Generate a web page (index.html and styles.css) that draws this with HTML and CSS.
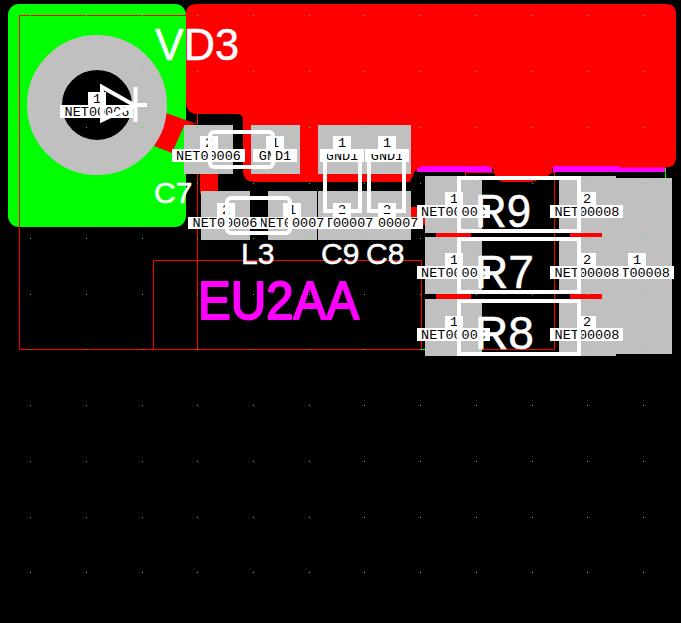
FILE: index.html
```html
<!DOCTYPE html>
<html lang="en">

<head>
    <meta charset="UTF-8">
    <title>EU2AA board view</title>
    <link rel="stylesheet" href="styles.css">
</head>

<body>
    <svg class="board" viewBox="0 0 681 623" width="681" height="623">
        <defs>
            <g id="dot-row">
                <rect x="30" width="1" height="1"/><rect x="86" width="1" height="1"/><rect x="142" width="1" height="1"/>
                <rect x="197" width="1" height="1"/><rect x="253" width="1" height="1"/><rect x="309" width="1" height="1"/>
                <rect x="364" width="1" height="1"/><rect x="420" width="1" height="1"/><rect x="476" width="1" height="1"/>
                <rect x="532" width="1" height="1"/><rect x="587" width="1" height="1"/><rect x="643" width="1" height="1"/>
            </g>
        </defs>

        <!-- copper -->
        <rect class="green" x="8" y="4" width="178" height="223" rx="11"/>
        <rect class="magenta" x="417" y="165" width="75" height="7"/>
        <rect class="magenta" x="553" y="165" width="112" height="7"/>
        <path class="red" d="M196 4H666Q676 4 676 14V157Q676 167.5 666 167.5H620V166H553Q553 174 546 177L532 182H505Q496 182 494 172Q493 166 486 166H424Q417 167 414 173L410 182H255Q243 182 243 170V120Q243 114 237 114H198Q186 114 186 102V14Q186 4 196 4Z"/>
        <polygon class="red" points="166,113 197,124 184,126 172,153 154,146"/>
        <rect class="red" x="200" y="174" width="18" height="20"/>
        <rect class="red" x="411" y="207" width="14" height="18"/>
        <rect class="red" x="436" y="233" width="35" height="4"/>
        <rect class="red" x="570" y="233" width="32" height="4"/>
        <rect class="red" x="436" y="294" width="35" height="5"/>
        <rect class="red" x="570" y="294" width="32" height="5"/>

        <!-- outline -->
        <path class="outline" d="M19.5 186V15.5H186M19.5 186V349.5H421.5V260.5H153.5V349.5M197.5 114V349.5M465.5 176V172.5H554.5V349.5H421.5"/>
        <path class="outline-green" d="M421 349.5H425M665.5 168V178"/>

        <!-- pads -->
        <circle class="hole" cx="97" cy="105" r="36"/>
        <circle class="pad-ring" cx="97" cy="105" r="52.5"/>
        <rect class="pad" x="184" y="125" width="49" height="49"/>
        <rect class="pad" x="251" y="125" width="49" height="49"/>
        <rect class="pad" x="318" y="125" width="93" height="49"/>
        <rect class="pad" x="201" y="191" width="49" height="49"/>
        <rect class="pad" x="268" y="191" width="49" height="49"/>
        <rect class="pad" x="318" y="191" width="93" height="49"/>
        <rect class="pad" x="425" y="176" width="57" height="57"/>
        <rect class="pad" x="425" y="237" width="57" height="57"/>
        <rect class="pad" x="425" y="299" width="57" height="57"/>
        <rect class="pad" x="559" y="176" width="57" height="57"/>
        <rect class="pad" x="559" y="237" width="57" height="57"/>
        <rect class="pad" x="559" y="299" width="57" height="57"/>
        <rect class="pad" x="602" y="178" width="70" height="176"/>

        <!-- grid -->
        <g class="dots">
            <use href="#dot-row" y="15"/><use href="#dot-row" y="71"/><use href="#dot-row" y="127"/>
            <use href="#dot-row" y="183"/><use href="#dot-row" y="238"/><use href="#dot-row" y="294"/>
            <use href="#dot-row" y="349"/><use href="#dot-row" y="405"/><use href="#dot-row" y="461"/>
            <use href="#dot-row" y="517"/><use href="#dot-row" y="572"/>
        </g>

        <!-- pad labels, last one drawn lies on top -->
        <g class="labels">
            <rect x="88" y="92" width="18" height="13"/><text x="97" y="103">1</text>
            <rect x="60" y="105" width="73" height="13"/><text x="97" y="116">NET00006</text>

            <rect x="200" y="136" width="18" height="13"/><text x="209" y="147">2</text>
            <rect x="172" y="149" width="73" height="13"/><text x="208.5" y="160">NET00006</text>
            <rect x="266" y="136" width="18" height="13"/><text x="275" y="147">1</text>
            <rect x="253" y="149" width="44" height="13"/><text x="275" y="160">GND1</text>
            <rect x="333" y="136" width="18" height="13"/><text x="342" y="147">1</text>
            <rect x="320" y="149" width="44" height="13"/><text x="342" y="160">GND1</text>
            <rect x="378" y="136" width="18" height="13"/><text x="387" y="147">1</text>
            <rect x="365" y="149" width="44" height="13"/><text x="387" y="160">GND1</text>

            <rect x="378" y="203" width="18" height="14"/><text x="387" y="214">2</text>
            <rect x="350" y="217" width="73" height="12"/><text x="386" y="227">NET00007</text>
            <rect x="333" y="203" width="18" height="14"/><text x="342" y="214">2</text>
            <rect x="305" y="217" width="73" height="12"/><text x="341" y="227">NET00007</text>
            <rect x="283" y="203" width="18" height="14"/><text x="292" y="214">1</text>
            <rect x="255" y="217" width="73" height="12"/><text x="292" y="227">NET00007</text>
            <rect x="217" y="203" width="18" height="14"/><text x="226" y="214">2</text>
            <rect x="188" y="217" width="73" height="12"/><text x="225" y="227">NET00006</text>

            <rect x="445" y="192" width="18" height="13"/><text x="454" y="203">1</text>
            <rect x="417" y="205" width="73" height="13"/><text x="453.5" y="216">NET00008</text>
            <rect x="578" y="192" width="18" height="13"/><text x="587" y="203">2</text>
            <rect x="550" y="205" width="73" height="13"/><text x="587" y="216">NET00008</text>

            <rect x="628" y="253" width="18" height="13"/><text x="637" y="264">1</text>
            <rect x="601" y="266" width="73" height="13"/><text x="637.5" y="277">NET00008</text>
            <rect x="445" y="253" width="18" height="13"/><text x="454" y="264">1</text>
            <rect x="417" y="266" width="73" height="13"/><text x="453.5" y="277">NET00008</text>
            <rect x="578" y="253" width="18" height="13"/><text x="587" y="264">2</text>
            <rect x="550" y="266" width="73" height="13"/><text x="587" y="277">NET00008</text>

            <rect x="445" y="316" width="18" height="12"/><text x="454" y="326">1</text>
            <rect x="417" y="328" width="73" height="13"/><text x="453.5" y="339">NET00008</text>
            <rect x="578" y="316" width="18" height="12"/><text x="587" y="326">2</text>
            <rect x="550" y="328" width="73" height="13"/><text x="587" y="339">NET00008</text>
        </g>

        <!-- silkscreen -->
        <g class="silk">
            <path d="M102 87V120L134 105ZM135.500 87V122M135.500 105H147"/>
            <rect x="210" y="132" width="63" height="35" rx="4"/>
            <rect x="227" y="198" width="63" height="35" rx="4"/>
            <rect x="325" y="152" width="35" height="59"/>
            <rect x="369" y="152" width="35" height="59"/>
            <rect x="459" y="178" width="120" height="53"/>
            <rect x="459" y="239" width="120" height="53"/>
            <rect x="459" y="301" width="120" height="53"/>
        </g>

        <!-- component names -->
        <g class="names">
            <text class="name-lg" x="155" y="60" textLength="84" lengthAdjust="spacingAndGlyphs">VD3</text>
            <text class="name-sm" x="154" y="203">C7</text>
            <text class="name-sm" x="241" y="264">L3</text>
            <text class="name-sm" x="321" y="264">C9</text>
            <text class="name-sm" x="366" y="264">C8</text>
            <text class="name-r" x="475" y="227" textLength="56" lengthAdjust="spacingAndGlyphs">R9</text>
            <text class="name-r" x="475" y="288" textLength="59" lengthAdjust="spacingAndGlyphs">R7</text>
            <text class="name-r" x="475" y="349" textLength="59" lengthAdjust="spacingAndGlyphs">R8</text>
        </g>
        <text class="part" x="198" y="318.500" textLength="161" lengthAdjust="spacingAndGlyphs">EU2AA</text>
    </svg>
</body>

</html>
```

FILE: styles.css
```css
html, body {
    margin: 0;
    padding: 0;
    background-color: #000;
}

.board {
    display: block;
}

.green {
    fill: #00ff00;
}

.red {
    fill: #ff0000;
}

.magenta {
    fill: #ff00ff;
}

.hole {
    fill: #000;
}

.outline {
    fill: none;
    stroke: #ff0000;
    stroke-width: 1;
}

.outline-green {
    fill: none;
    stroke: #00ff00;
    stroke-width: 1;
}

.pad {
    fill: #c0c0c0;
}

.pad-ring {
    fill: none;
    stroke: #c0c0c0;
    stroke-width: 35;
}

.dots {
    fill: #00ff00;
}

.labels rect {
    fill: #fff;
}

.labels text {
    fill: #000;
    font-family: "Liberation Mono", monospace;
    font-size: 13.5px;
    text-anchor: middle;
}

.silk {
    fill: none;
    stroke: #fff;
    stroke-width: 4;
}

.names text {
    fill: #fff;
    stroke: #fff;
    stroke-width: 0.5;
    font-family: "Liberation Sans", sans-serif;
}

.name-lg {
    font-size: 44px;
}

.name-r {
    font-size: 47px;
}

.name-sm {
    font-size: 30px;
}

.part {
    fill: #ff00ff;
    stroke: #ff00ff;
    stroke-width: 2;
    stroke-linejoin: round;
    font-family: "Liberation Sans", sans-serif;
    font-size: 53px;
}
```
